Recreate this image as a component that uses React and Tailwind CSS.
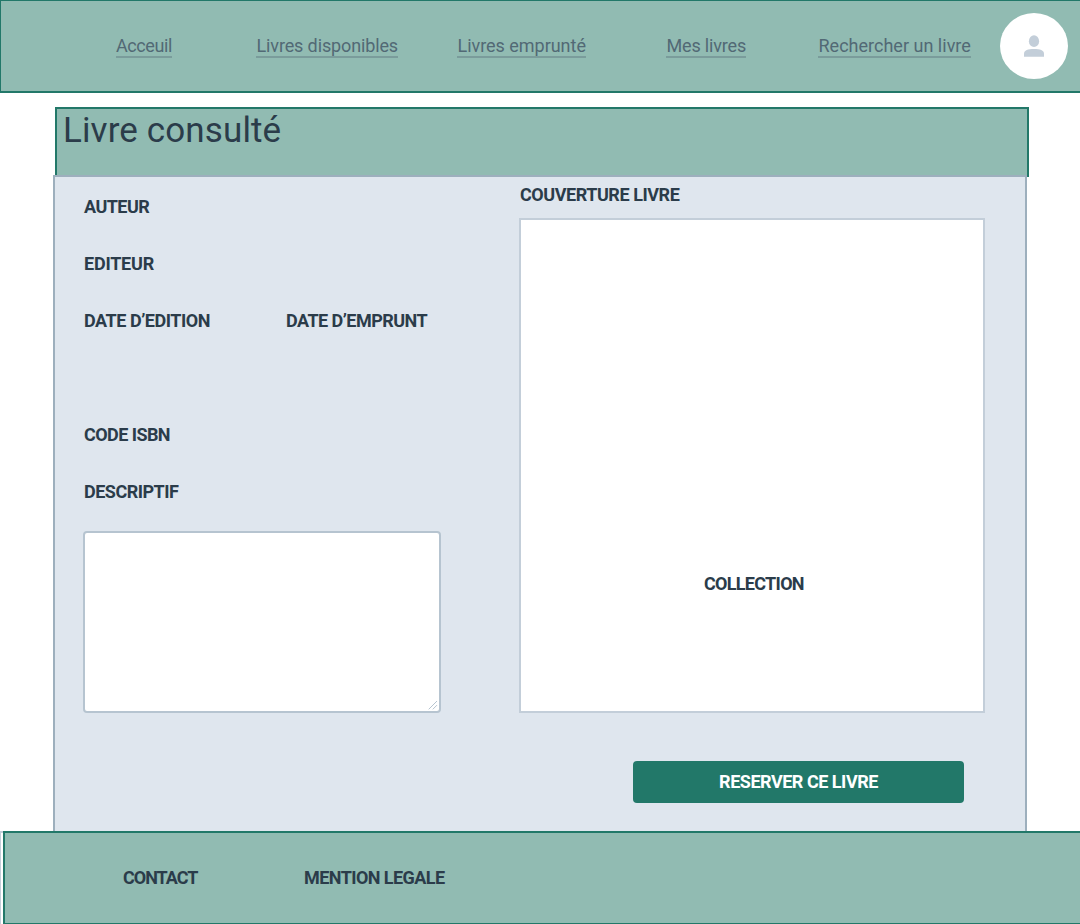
const links = [
  { text: 'Acceuil', cls: 'w-[56px] ml-[115px] tracking-[-0.42px]' },
  { text: 'Livres disponibles', cls: 'w-[142px] ml-[84px] pl-[0.5px] tracking-[-0.13px]' },
  { text: 'Livres emprunté', cls: 'w-[129px] ml-[59px] pl-[0.5px] tracking-[-0.03px]' },
  { text: 'Mes livres', cls: 'w-[80px] ml-[80px] pl-[0.5px] tracking-[-0.17px]' },
  { text: 'Rechercher un livre', cls: 'w-[153px] ml-[72px] pl-[0.5px] tracking-[0.01px]' },
];

function Label({ className = '', children }) {
  return (
    <span className={`block whitespace-nowrap text-lg font-bold leading-[21px] ${className}`}>
      {children}
    </span>
  );
}

function Header() {
  return (
    <header className="flex h-[93px] items-start border-t border-b-2 border-l border-[#227869] bg-[#91bbb2]">
      <nav className="flex pt-[34px]">
        {links.map(({ text, cls }) => (
          <a
            key={text}
            href="#"
            className={`block h-[23px] whitespace-nowrap border-b-2 border-[#7a9c9b] text-lg leading-[21px] text-[#526975] ${cls}`}
          >
            {text}
          </a>
        ))}
      </nav>
      <div className="mt-3 ml-[29px] h-[66px] w-[68px] shrink-0">
        <svg width="68" height="66" viewBox="0 0 68 66" aria-hidden="true">
          <ellipse cx="34" cy="33" rx="34" ry="33" fill="#fff" />
          <ellipse cx="34" cy="28.2" rx="5.1" ry="5.9" fill="#c3ced9" />
          <path d="M24 43.7v-2.9c0-3.6 4-4.8 10-4.8s10 1.2 10 4.8v2.9z" fill="#c3ced9" />
        </svg>
      </div>
    </header>
  );
}

function Details() {
  return (
    <div className="w-[358px] pt-px">
      <div className="flex h-[57px] items-center pl-px"><Label className="tracking-[-0.55px]">AUTEUR</Label></div>
      <div className="flex h-[57px] items-center pl-px"><Label className="tracking-[-0.22px]">EDITEUR</Label></div>
      <div className="flex h-[57px] items-center pl-px">
        <Label className="w-[202px] tracking-[-0.47px]">DATE D’EDITION</Label>
        <Label className="tracking-[-0.54px]">DATE D’EMPRUNT</Label>
      </div>
      <div className="h-[57px]" />
      <div className="flex h-[57px] items-center pl-px"><Label className="tracking-[-0.56px]">CODE ISBN</Label></div>
      <div className="flex h-[57px] items-center pl-px"><Label className="tracking-[-0.5px]">DESCRIPTIF</Label></div>
      <div className="mt-[11px] flex h-[182px] items-end justify-end rounded border-2 border-[#b6c4d0] bg-white p-px">
        <svg width="10" height="10" viewBox="0 0 10 10" fill="none" stroke="#b6c4d0" aria-hidden="true">
          <path d="M.7 9.3 9 1M4.8 9.3 9 5.1" />
        </svg>
      </div>
    </div>
  );
}

function Cover() {
  return (
    <div className="ml-[78px] w-[466px]">
      <Label className="mt-[7px] pl-px tracking-[-0.45px]">COUVERTURE LIVRE</Label>
      <div className="mt-[13px] h-[495px] border-2 border-[#c3ced9] bg-white pt-[353px] pl-[183px]">
        <Label className="tracking-[-0.7px]">COLLECTION</Label>
      </div>
      <button className="mt-12 ml-[114px] flex h-[42px] w-[331px] items-center justify-center rounded bg-[#227869] pb-[2px] text-white">
        <Label className="tracking-[-0.48px]">RESERVER CE LIVRE</Label>
      </button>
    </div>
  );
}

export default function App() {
  return (
    <div className="h-[924px] w-[1080px] overflow-hidden bg-white font-[Roboto,sans-serif] text-[#2b3c4a]">
      <Header />
      <section className="mt-[14px] ml-[55px] h-[70px] w-[974px] border-2 border-[#227869] bg-[#91bbb2] pt-px pl-[6px]">
        <h1 className="whitespace-nowrap text-[35px] font-normal leading-[42px] tracking-[0.12px]">Livre consulté</h1>
      </section>
      <main className="relative -mt-[2px] ml-[53px] flex h-[656px] w-[974px] border-x-2 border-t-2 border-[#9dafbd] bg-[#dfe6ee] pl-[28px]">
        <Details />
        <Cover />
      </main>
      <div className="flex h-[93px]">
        <div className="h-full w-[3px] shrink-0 border-t-2 border-l border-[#c3ced9]" />
        <footer className="flex flex-1 items-center border-t-2 border-b border-l-2 border-[#227869] bg-[#91bbb2] pb-[2px]">
          <Label className="ml-[118px] w-[181px] tracking-[-1.02px]">CONTACT</Label>
          <Label className="tracking-[-0.56px]">MENTION LEGALE</Label>
        </footer>
      </div>
    </div>
  );
}
